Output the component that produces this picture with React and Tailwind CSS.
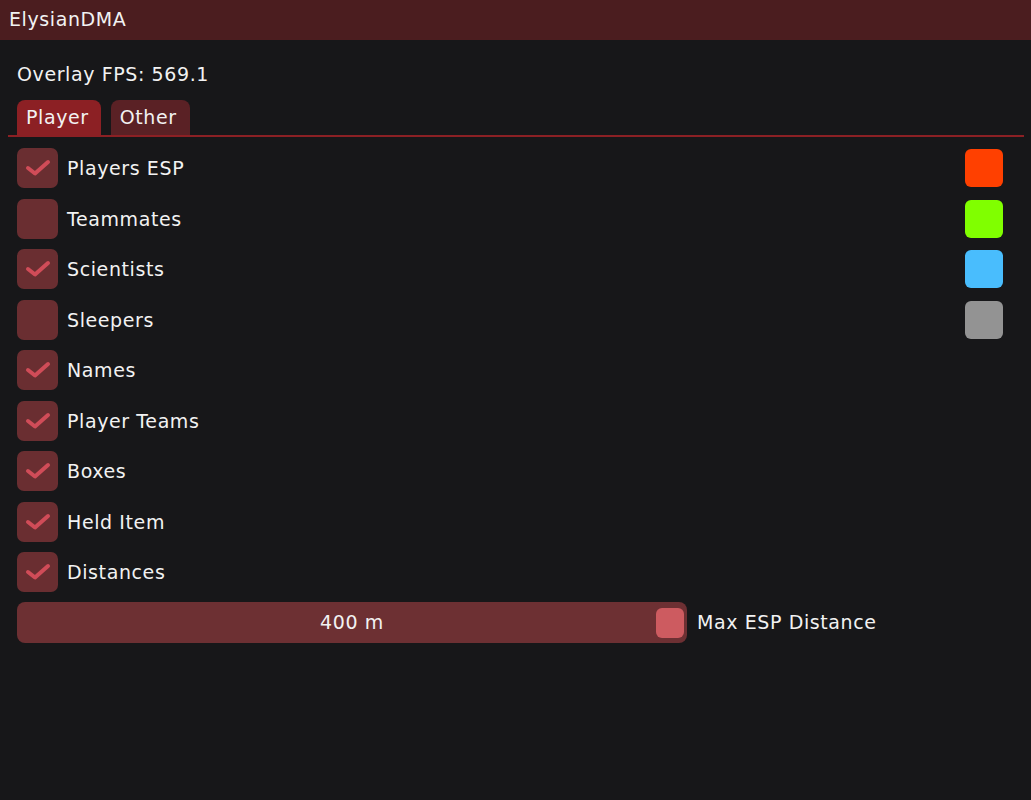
const rows = [
  { label: "Players ESP", checked: true, color: "bg-[#ff4000]" },
  { label: "Teammates", checked: false, color: "bg-[#80ff00]" },
  { label: "Scientists", checked: true, color: "bg-[#49bdfd]" },
  { label: "Sleepers", checked: false, color: "bg-[#939393]" },
  { label: "Names", checked: true },
  { label: "Player Teams", checked: true },
  { label: "Boxes", checked: true },
  { label: "Held Item", checked: true },
  { label: "Distances", checked: true },
];

function Check() {
  return (
    <svg width="26" height="18" viewBox="0 0 26 18" fill="none">
      <path
        d="M3 9 L10 14.5 L23 3"
        stroke="#d04c58"
        strokeWidth="4"
        strokeLinecap="round"
        strokeLinejoin="round"
      />
    </svg>
  );
}

export default function App() {
  return (
    <div
      className="flex h-[800px] w-[1031px] flex-col bg-[#171719] text-[19px] tracking-[0.6px] text-[#f2f2f2]"
      style={{ fontFamily: '"DejaVu Sans", sans-serif' }}
    >
      <div className="flex h-[40px] items-center bg-[#4b1d1f] px-[9px] pb-[1px]">ElysianDMA</div>

      <div className="flex flex-col pl-[17px] pr-[7px]">
        <div className="mt-[22px] h-[24px] leading-[24px]">Overlay FPS: 569.1</div>

        <div className="-ml-[9px] mt-[14px] flex items-end gap-[10px] border-b-2 border-[#8c2024] pl-[9px]">
          <div className="flex h-[35px] items-center rounded-t-[8px] bg-[#8c2024] pl-[9px] pr-[12px]">Player</div>
          <div className="flex h-[35px] items-center rounded-t-[8px] bg-[#5a2125] pl-[9px] pr-[13px]">Other</div>
        </div>

        <div className="mt-[11px] flex flex-col gap-[10px]">
          {rows.map((r) => (
            <div key={r.label} className="flex h-[40.5px] items-center">
              <div className="flex h-[40px] w-[41px] items-center justify-center rounded-[7px] bg-[#6a2e31]">
                {r.checked && <Check />}
              </div>
              <span className="ml-[9px]">{r.label}</span>
              {r.color && (
                <div className={`ml-auto mr-[21px] h-[38px] w-[38px] rounded-[6px] ${r.color}`} />
              )}
            </div>
          ))}

          <div className="-mt-[1px] flex h-[41px] items-center">
            <div className="relative flex h-[41px] w-[670px] items-center justify-center rounded-[8px] bg-[#6d3033]">
              <span>400 m</span>
              <div className="absolute right-[3px] top-[6px] h-[30px] w-[28px] rounded-[6px] bg-[#cd5b60]" />
            </div>
            <span className="ml-[10px]">Max ESP Distance</span>
          </div>
        </div>
      </div>
    </div>
  );
}
